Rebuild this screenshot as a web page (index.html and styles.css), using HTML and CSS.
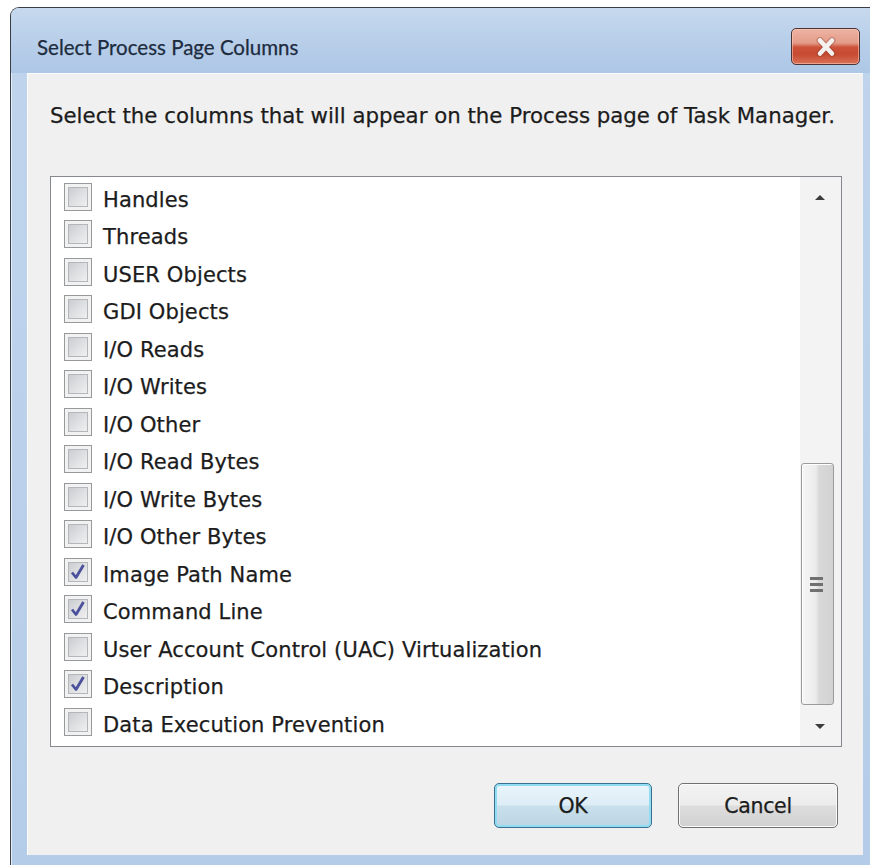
FILE: index.html
```html
<!DOCTYPE html>
<html lang="en">
<head>
<meta charset="utf-8">
<title>Select Process Page Columns</title>
<link rel="stylesheet" href="styles.css">
</head>
<body>
<div class="window">
  <div class="titlebar">
    <span class="title">Select Process Page Columns</span>
    <button class="close" aria-label="Close">
      <svg width="26" height="20" viewBox="0 0 26 20">
        <path d="M7 3.5 L19 16.5 M19 3.5 L7 16.5" stroke="#7a3326" stroke-width="7" stroke-linecap="round" opacity="0.3"/>
        <path d="M7 3.5 L19 16.5 M19 3.5 L7 16.5" stroke="#f4f1ef" stroke-width="4.5" stroke-linecap="round"/>
      </svg>
    </button>
  </div>
  <div class="frame">
    <div class="client">
      <p class="intro">Select the columns that will appear on the Process page of Task Manager.</p>
      <div class="listbox">
        <ul class="items">
          <li class="item"><span class="check"></span><span class="label">Handles</span></li>
          <li class="item"><span class="check"></span><span class="label">Threads</span></li>
          <li class="item"><span class="check"></span><span class="label">USER Objects</span></li>
          <li class="item"><span class="check"></span><span class="label">GDI Objects</span></li>
          <li class="item"><span class="check"></span><span class="label">I/O Reads</span></li>
          <li class="item"><span class="check"></span><span class="label">I/O Writes</span></li>
          <li class="item"><span class="check"></span><span class="label">I/O Other</span></li>
          <li class="item"><span class="check"></span><span class="label">I/O Read Bytes</span></li>
          <li class="item"><span class="check"></span><span class="label">I/O Write Bytes</span></li>
          <li class="item"><span class="check"></span><span class="label">I/O Other Bytes</span></li>
          <li class="item"><span class="check is-checked"><svg viewBox="0 0 20 20" width="20" height="20"><path d="M4 10.5 L8 15.5 L15.5 3" fill="none" stroke="#4b509c" stroke-width="2.8" stroke-linejoin="round"/></svg></span><span class="label">Image Path Name</span></li>
          <li class="item"><span class="check is-checked"><svg viewBox="0 0 20 20" width="20" height="20"><path d="M4 10.5 L8 15.5 L15.5 3" fill="none" stroke="#4b509c" stroke-width="2.8" stroke-linejoin="round"/></svg></span><span class="label">Command Line</span></li>
          <li class="item"><span class="check"></span><span class="label">User Account Control (UAC) Virtualization</span></li>
          <li class="item"><span class="check is-checked"><svg viewBox="0 0 20 20" width="20" height="20"><path d="M4 10.5 L8 15.5 L15.5 3" fill="none" stroke="#4b509c" stroke-width="2.8" stroke-linejoin="round"/></svg></span><span class="label">Description</span></li>
          <li class="item"><span class="check"></span><span class="label">Data Execution Prevention</span></li>
        </ul>
        <div class="scrollbar">
          <div class="arrow"><span class="tri tri-up"></span></div>
          <div class="track">
            <div class="thumb"><span class="grip"></span></div>
          </div>
          <div class="arrow"><span class="tri tri-down"></span></div>
        </div>
      </div>
      <div class="actions">
        <button class="btn btn-default">OK</button>
        <button class="btn">Cancel</button>
      </div>
    </div>
  </div>
</div>
</body>
</html>
```
FILE: styles.css
```css
html, body {
  margin: 0;
  padding: 0;
  background: #ffffff;
  overflow: hidden;
  height: 100%;
}

.window {
  margin: 7px 0 0 10px;
  width: 870px;
  height: 870px;
  border: 1px solid #3a3f47;
  border-right: none;
  border-radius: 9px 9px 0 0;
  background: linear-gradient(180deg, #c0d4ec 0%, #bad0ea 60%, #b4cce8 100%);
  box-shadow: inset 1px 1px 0 #e4eef9;
  display: flex;
  flex-direction: column;
  box-sizing: border-box;
}

/* caption bar */
.titlebar {
  height: 65px;
  display: flex;
  align-items: flex-start;
  padding: 0 20px 0 26px;
  background: linear-gradient(180deg, #c6d9ee 0%, #bad0ea 45%, #adc7e6 100%);
  border-radius: 8px 8px 0 0;
  box-sizing: border-box;
  flex-shrink: 0;
}

.title {
  font-family: Lato, "Noto Sans", sans-serif;
  font-size: 20.5px;
  line-height: 28px;
  padding-top: 25px;
  color: #1d2c3e;
  -webkit-text-stroke: 0.25px #1d2c3e;
}

.close {
  margin-left: auto;
  margin-top: 20px;
  width: 69px;
  height: 37px;
  padding: 0;
  border: 1px solid #4a3636;
  border-radius: 5px;
  background: linear-gradient(180deg, #eeb3a3 0%, #e49c89 40%, #cd5239 52%, #c54a31 72%, #db7257 100%);
  box-shadow: inset 0 0 0 1px rgba(255, 205, 190, 0.55);
  display: flex;
  align-items: center;
  justify-content: center;
}

.frame {
  flex: 1;
  padding: 0 16px 0 16px;
}

/* dialog body */
.client {
  width: 836px;
  height: 782px;
  background: #f0f0f0;
  box-shadow: inset 1px 1px 0 #fafcfe;
  box-sizing: border-box;
  padding-top: 31px;
  display: flex;
  flex-direction: column;
  font-family: "DejaVu Sans", Verdana, sans-serif;
  color: #1c1c1c;
}

.intro {
  margin: 0 0 0 23px;
  font-size: 21.3px;
  line-height: 24px;
  white-space: nowrap;
  -webkit-text-stroke: 0.25px #1c1c1c;
}

.listbox {
  margin: 48px 0 0 23px;
  width: 792px;
  height: 571px;
  border: 1px solid #85888d;
  background: #ffffff;
  box-sizing: border-box;
  display: flex;
}

.items {
  list-style: none;
  margin: 0;
  padding: 1px 0 0 0;
  flex: 1;
}

.item {
  height: 37.5px;
  display: flex;
  align-items: center;
  padding-left: 13px;
}

.check {
  width: 28px;
  height: 28px;
  box-sizing: border-box;
  border: 1px solid #98999b;
  background: #f2f2f2;
  padding: 3px;
  margin-right: 11px;
  display: flex;
  align-items: center;
  justify-content: center;
  position: relative;
  flex-shrink: 0;
}

.check::before {
  content: "";
  position: absolute;
  inset: 3px;
  border: 1px solid #b3b6ba;
  background: linear-gradient(135deg, #cbcdd1 0%, #dedfe1 50%, #f0f0f0 100%);
}

.check svg {
  position: relative;
}

.label {
  font-size: 21px;
  line-height: 24px;
  margin-top: 6px;
  letter-spacing: 0.12px;
  white-space: nowrap;
  -webkit-text-stroke: 0.25px #1c1c1c;
}

/* vertical scroll bar */
.scrollbar {
  width: 41px;
  background: #f3f3f3;
  display: flex;
  flex-direction: column;
  flex-shrink: 0;
}

.arrow {
  height: 40px;
  display: flex;
  align-items: center;
  justify-content: center;
  padding-right: 2px;
}

.tri {
  width: 0;
  height: 0;
  border-left: 5px solid transparent;
  border-right: 5px solid transparent;
}

.tri-up {
  border-bottom: 5px solid #3c3c3c;
}

.tri-down {
  border-top: 5px solid #3c3c3c;
}

.track {
  flex: 1;
  display: flex;
  flex-direction: column;
  justify-content: flex-end;
  padding: 0 0 1px 1px;
}

.thumb {
  width: 33px;
  height: 242px;
  box-sizing: border-box;
  border: 1px solid #999b9e;
  border-radius: 3px;
  background: linear-gradient(90deg, #f6f6f6 0%, #ebebeb 45%, #d9d9d9 55%, #d2d2d2 100%);
  box-shadow: inset 1px 1px 0 #ffffff;
  display: flex;
  align-items: center;
  justify-content: center;
}

.grip {
  width: 13px;
  height: 3px;
  background: #707070;
  box-shadow: 0 -6px 0 #707070, 0 6px 0 #707070;
  margin-left: -2px;
}

/* dialog buttons */
.actions {
  display: flex;
  justify-content: flex-end;
  gap: 26px;
  padding-right: 25px;
  margin-top: 36px;
}

.btn {
  width: 160px;
  height: 45px;
  box-sizing: border-box;
  border: 1px solid #707070;
  border-radius: 5px;
  background: linear-gradient(180deg, #f3f3f3 0%, #ececec 48%, #dddddd 52%, #d1d1d1 100%);
  box-shadow: inset 0 0 0 1px #fbfbfb;
  font-family: "DejaVu Sans", Verdana, sans-serif;
  font-size: 20.5px;
  letter-spacing: -0.3px;
  color: #1c1c1c;
  -webkit-text-stroke: 0.25px #1c1c1c;
  padding: 0;
}

.btn-default {
  width: 158px;
  border-color: #3c6f8c;
  background: linear-gradient(180deg, #eaf5fb 0%, #ddedf6 48%, #c9e0ec 52%, #bcd5e3 100%);
  box-shadow: inset 0 0 0 2px #8fdcf3;
}
```
